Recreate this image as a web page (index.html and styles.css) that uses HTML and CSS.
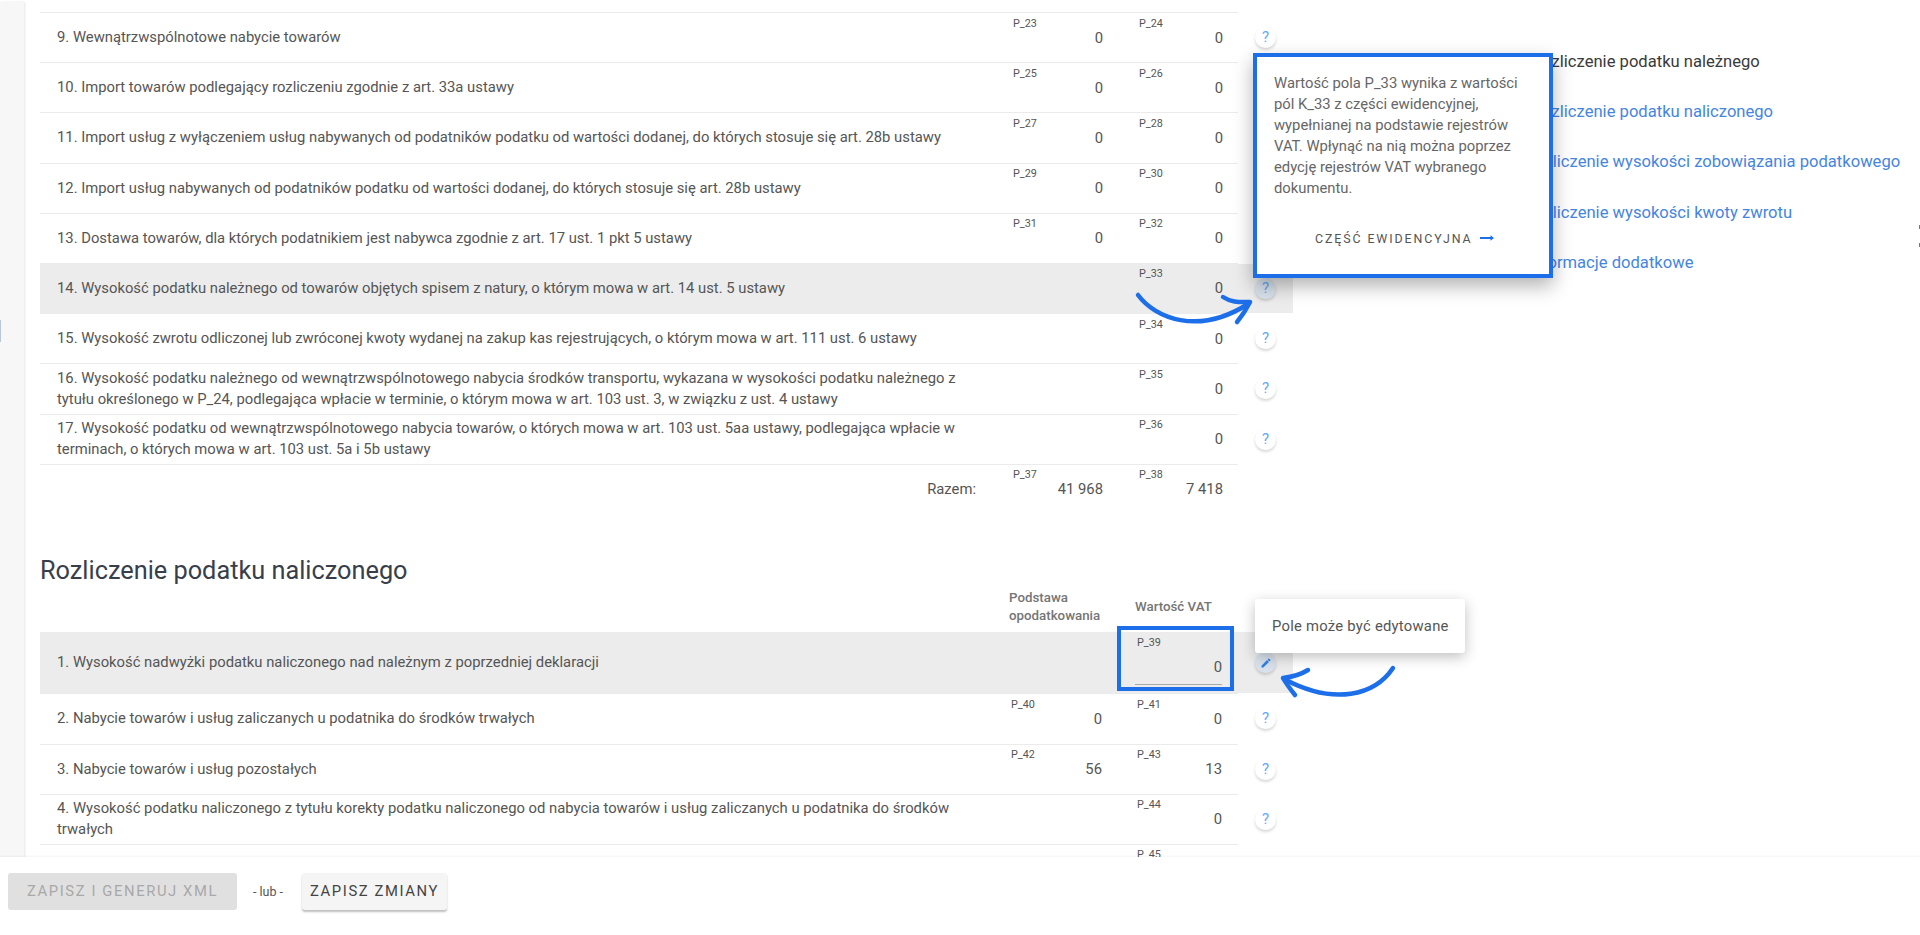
FILE: index.html
```html
<!DOCTYPE html>
<html lang="pl">
<head>
<meta charset="utf-8">
<title>Deklaracja VAT</title>
<link rel="stylesheet" href="styles.css">
</head>
<body>
<div class="page">
  <div class="workspace">
    <div class="stripe"></div>
    <main class="content">
      <section class="table first">
        <div class="row"><div class="label">9. Wewnątrzwspólnotowe nabycie towarów</div><div class="cell c1"><span class="code">P_23</span><span class="val">0</span></div><div class="cell c2"><span class="code">P_24</span><span class="val">0</span></div><div class="action"><button class="round">?</button></div></div>
        <div class="row"><div class="label">10. Import towarów podlegający rozliczeniu zgodnie z art. 33a ustawy</div><div class="cell c1"><span class="code">P_25</span><span class="val">0</span></div><div class="cell c2"><span class="code">P_26</span><span class="val">0</span></div><div class="action"><button class="round">?</button></div></div>
        <div class="row"><div class="label">11. Import usług z wyłączeniem usług nabywanych od podatników podatku od wartości dodanej, do których stosuje się art. 28b ustawy</div><div class="cell c1"><span class="code">P_27</span><span class="val">0</span></div><div class="cell c2"><span class="code">P_28</span><span class="val">0</span></div><div class="action"><button class="round">?</button></div></div>
        <div class="row"><div class="label">12. Import usług nabywanych od podatników podatku od wartości dodanej, do których stosuje się art. 28b ustawy</div><div class="cell c1"><span class="code">P_29</span><span class="val">0</span></div><div class="cell c2"><span class="code">P_30</span><span class="val">0</span></div><div class="action"><button class="round">?</button></div></div>
        <div class="row"><div class="label">13. Dostawa towarów, dla których podatnikiem jest nabywca zgodnie z art. 17 ust. 1 pkt 5 ustawy</div><div class="cell c1"><span class="code">P_31</span><span class="val">0</span></div><div class="cell c2"><span class="code">P_32</span><span class="val">0</span></div><div class="action"><button class="round">?</button></div></div>
        <div class="row active"><div class="label">14. Wysokość podatku należnego od towarów objętych spisem z natury, o którym mowa w art. 14 ust. 5 ustawy</div><div class="cell c1"></div><div class="cell c2"><span class="code">P_33</span><span class="val">0</span></div><div class="action"><button class="round">?</button></div></div>
        <div class="row"><div class="label">15. Wysokość zwrotu odliczonej lub zwróconej kwoty wydanej na zakup kas rejestrujących, o którym mowa w art. 111 ust. 6 ustawy</div><div class="cell c1"></div><div class="cell c2"><span class="code">P_34</span><span class="val">0</span></div><div class="action"><button class="round">?</button></div></div>
        <div class="row"><div class="label">16. Wysokość podatku należnego od wewnątrzwspólnotowego nabycia środków transportu, wykazana w wysokości podatku należnego z tytułu określonego w P_24, podlegająca wpłacie w terminie, o którym mowa w art. 103 ust. 3, w związku z ust. 4 ustawy</div><div class="cell c1"></div><div class="cell c2"><span class="code">P_35</span><span class="val">0</span></div><div class="action"><button class="round">?</button></div></div>
        <div class="row"><div class="label">17. Wysokość podatku od wewnątrzwspólnotowego nabycia towarów, o których mowa w art. 103 ust. 5aa ustawy, podlegająca wpłacie w terminach, o których mowa w art. 103 ust. 5a i 5b ustawy</div><div class="cell c1"></div><div class="cell c2"><span class="code">P_36</span><span class="val">0</span></div><div class="action"><button class="round">?</button></div></div>
        <div class="row total"><div class="label razem">Razem:</div><div class="cell c1"><span class="code">P_37</span><span class="val">41 968</span></div><div class="cell c2"><span class="code">P_38</span><span class="val">7 418</span></div></div>
      </section>

      <h2 class="title">Rozliczenie podatku naliczonego</h2>
      <div class="head">
        <div class="head-c1">Podstawa opodatkowania</div>
        <div class="head-c2">Wartość VAT</div>
      </div>
      <section class="table second">
        <div class="row active tall"><div class="label">1. Wysokość nadwyżki podatku naliczonego nad należnym z poprzedniej deklaracji</div><div class="cell c1"></div><div class="cell c2 editable"><span class="code">P_39</span><span class="val">0</span><span class="focus"></span></div><div class="action"><button class="round"><svg class="pencil" viewBox="0 0 24 24"><path d="M3 17.25V21h3.75L17.81 9.94l-3.75-3.75L3 17.25zM20.71 7.04a1 1 0 0 0 0-1.41l-2.34-2.34a1 1 0 0 0-1.41 0l-1.83 1.83 3.75 3.75 1.83-1.83z"/></svg></button></div></div>
        <div class="row"><div class="label">2. Nabycie towarów i usług zaliczanych u podatnika do środków trwałych</div><div class="cell c1"><span class="code">P_40</span><span class="val">0</span></div><div class="cell c2"><span class="code">P_41</span><span class="val">0</span></div><div class="action"><button class="round">?</button></div></div>
        <div class="row"><div class="label">3. Nabycie towarów i usług pozostałych</div><div class="cell c1"><span class="code">P_42</span><span class="val">56</span></div><div class="cell c2"><span class="code">P_43</span><span class="val">13</span></div><div class="action"><button class="round">?</button></div></div>
        <div class="row"><div class="label">4. Wysokość podatku naliczonego z tytułu korekty podatku naliczonego od nabycia towarów i usług zaliczanych u podatnika do środków trwałych</div><div class="cell c1"></div><div class="cell c2"><span class="code">P_44</span><span class="val">0</span></div><div class="action"><button class="round">?</button></div></div>
        <div class="row"><div class="label"></div><div class="cell c1"></div><div class="cell c2"><span class="code">P_45</span></div></div>
      </section>
    </main>
    <nav class="side">
      <a class="side-link current">Rozliczenie podatku należnego</a>
      <a class="side-link">Rozliczenie podatku naliczonego</a>
      <a class="side-link shift">Rozliczenie wysokości zobowiązania podatkowego</a>
      <a class="side-link shift">Rozliczenie wysokości kwoty zwrotu</a>
      <a class="side-link info">Informacje dodatkowe</a>
    </nav>
  </div>

  <footer class="bar">
    <button class="btn disabled">ZAPISZ I GENERUJ XML</button>
    <span class="or">- lub -</span>
    <button class="btn raised">ZAPISZ ZMIANY</button>
  </footer>

  <div class="popup">
    <p class="popup-text">Wartość pola P_33 wynika z wartości pól K_33 z części ewidencyjnej, wypełnianej na podstawie rejestrów VAT. Wpłynąć na nią można poprzez edycję rejestrów VAT wybranego dokumentu.</p>
    <div class="popup-action">CZĘŚĆ EWIDENCYJNA<svg class="popup-arrow" viewBox="0 0 14 8"><path d="M0 3h10.5V1.2L14 4l-3.5 2.8V5H0z"/></svg></div>
  </div>
  <div class="tip">Pole może być edytowane</div>

  <span class="edge edge-left"></span>
  <span class="edge edge-right-a"></span>
  <span class="edge edge-right-b"></span>

  <svg class="marks" viewBox="0 0 1920 935">
    <g class="mark">
      <path d="M1138 295C1155 318 1198 336 1248 304"/>
      <path d="M1223 297C1232 303 1240 302 1250 302C1246 310 1242 316 1237 322"/>
      <path d="M1393 668C1375 695 1335 706 1284 679"/>
      <path d="M1308 670C1300 675 1292 677 1283 678C1287 685 1291 690 1295 695"/>
    </g>
  </svg>
</div>
</body>
</html>
```
FILE: styles.css
```css
* { box-sizing: border-box; }
html, body { margin: 0; height: 100%; overflow: hidden; background: #fff; }
body { font-family: Roboto, "Liberation Sans", sans-serif; font-size: 14.8px; color: #555; }
.page { position: relative; width: 1920px; height: 935px; display: flex; flex-direction: column; overflow: hidden; }
.workspace { flex: 1; min-height: 0; display: flex; overflow: hidden; }
.stripe { flex: 0 0 24px; margin-top: 2px; background: #f7f7f7; box-shadow: 1px 0 2px rgba(0,0,0,.1); }
.content { flex: 0 0 1198px; margin-left: 16px; padding-top: 12px; }
.table { display: flex; flex-direction: column; }
.first { border-top: 1px solid #ebebeb; }
.row { position: relative; display: flex; height: 50.2px; border-bottom: 1.5px solid #ebebeb; flex: none; }
.label { flex: 0 0 968px; display: flex; align-items: center; padding: 0 18px 0 17px; line-height: 21px; color: #555; }
.cell { position: relative; display: flex; flex-direction: column; padding-top: 4.5px; }
.c1 { flex: 0 0 110px; padding-left: 5px; padding-right: 15px; }
.c2 { flex: 0 0 120px; padding-left: 21px; padding-right: 15px; }
.code { font-size: 10.8px; line-height: 12px; color: #555; }
.val { font-size: 14.8px; line-height: 16px; text-align: right; color: #555; }
.action { flex: 0 0 55px; margin-right: -55px; padding-left: 17px; display: flex; align-items: center; }
.round { width: 21px; height: 21px; padding: 0; border: 0; border-radius: 50%; background: #fff; color: #64a8f8; font: 400 15px/21px Roboto, sans-serif; box-shadow: 0 2px 3px rgba(0,0,0,.16); display: flex; align-items: center; justify-content: center; }
.active, .active .action { background: #ececec; }
.active .round { background: #d9e2ec; }
.total { border-bottom: 0; }
.razem { justify-content: flex-end; padding-right: 32px; }
.title { margin: 40px 0 0; font-size: 25.3px; font-weight: 400; line-height: 32px; color: #37404a; }
.head { display: flex; height: 45.5px; padding-left: 969px; font-weight: 500; font-size: 13.3px; line-height: 18px; color: #757575; }
.head-c1 { flex: 0 0 126px; padding-top: 2px; }
.head-c2 { padding-top: 11px; }
.second .c1 { padding-left: 3px; padding-right: 16px; }
.second .c2 { padding-left: 19px; padding-right: 16px; }
.tall { height: 62px; }
.editable { padding-top: 5px; }
.editable .val { margin-top: 10px; padding-bottom: 9px; margin-left: -2px; border-bottom: 1px solid #aaa; }
.focus { position: absolute; left: -1px; top: -6px; width: 117px; height: 65px; border: 4px solid #1c6fe8; }
.pencil { width: 12px; height: 12px; fill: #2f80ea; }
.side { flex: none; margin-left: 294px; padding-top: 37px; display: flex; flex-direction: column; }
.side-link { display: block; font-size: 16.6px; line-height: 50.2px; color: #4585e2; white-space: nowrap; }
.current { color: #3a3a3a; }
.shift { margin-left: -7px; }
.info { margin-left: -4px; }
.bar { flex: 0 0 78px; position: relative; z-index: 3; background: #fff; display: flex; align-items: center; padding: 0 0 10px 8px; box-shadow: 0 -1px 2px rgba(0,0,0,.05); }
.btn { height: 37px; border: 0; border-radius: 3px; font: 400 14.8px Roboto, sans-serif; letter-spacing: 1.6px; }
.disabled { width: 229px; background: #e0e0e0; color: #a8a8a8; }
.raised { width: 145px; background: #f5f5f5; color: #444; box-shadow: 0 2px 2px rgba(0,0,0,.25); }
.or { width: 65px; padding-left: 16px; font-size: 12.5px; color: #555; }
.popup { position: absolute; left: 1253px; top: 53px; width: 300px; height: 225px; border: 4px solid #1c6fe8; background: #fff; box-shadow: 0 8px 18px rgba(0,0,0,.3); padding: 16px 17px; z-index: 2; }
.popup-text { margin: 0; line-height: 21px; color: #666; }
.popup-action { display: flex; align-items: center; margin-top: 31.5px; padding-left: 41px; font-size: 12.4px; letter-spacing: 1.9px; color: #555; white-space: nowrap; }
.popup-arrow { width: 14px; height: 8px; margin-left: 7px; fill: #1c6fe8; }
.tip { position: absolute; left: 1255px; top: 599px; width: 210px; height: 54px; border-radius: 3px; background: #fff; box-shadow: 0 4px 14px rgba(0,0,0,.25); padding-left: 17px; line-height: 54px; letter-spacing: .25px; color: #555; z-index: 2; }
.marks { position: absolute; left: 0; top: 0; width: 1920px; height: 935px; pointer-events: none; z-index: 1; }
.mark path { fill: none; stroke: #1c6fe8; stroke-width: 4.5; stroke-linecap: round; stroke-linejoin: round; }
.edge { position: absolute; width: 1px; }
.edge-left { left: 0; top: 320px; height: 22px; background: #b8c8dc; }
.edge-right-a { left: 1919px; top: 225px; height: 4px; background: #777; }
.edge-right-b { left: 1919px; top: 243px; height: 4px; background: #777; }
```
